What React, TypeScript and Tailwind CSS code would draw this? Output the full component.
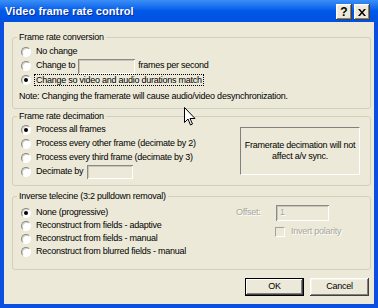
import type { ReactNode } from "react";

const raised =
  "shadow-[inset_-1px_-1px_#404040,inset_1px_1px_#ffffff,inset_-2px_-2px_#808080,inset_2px_2px_#f4f2e8]";
const sunken =
  "shadow-[inset_1px_1px_#8a8a86,inset_-1px_-1px_#ffffff,inset_2px_2px_#c9c6b8]";
const disabledText = "text-[#a9a69a] [text-shadow:1px_1px_0_#ffffff]";

const Radio = ({ checked }: { checked?: boolean }) => (
  <span className="flex h-[10px] w-[10px] shrink-0 items-center justify-center rounded-full border border-t-[#8a8a86] border-l-[#8a8a86] border-r-white border-b-white bg-white shadow-[inset_1px_1px_#d6d3c6]">
    {checked && <span className="h-[4px] w-[4px] rounded-full bg-black" />}
  </span>
);

const Row = ({
  checked,
  h = "h-[14px]",
  children,
}: {
  checked?: boolean;
  h?: string;
  children: ReactNode;
}) => (
  <div className={`flex items-center ${h}`}>
    <Radio checked={checked} />
    <div className="ml-[5px] flex items-center whitespace-nowrap">{children}</div>
  </div>
);

const Group = ({
  title,
  className,
  children,
}: {
  title: string;
  className?: string;
  children: ReactNode;
}) => (
  <fieldset className={`rounded-[3px] border border-[#d0d0bf] px-[4px] ${className ?? ""}`}>
    <legend className="px-[2px] leading-[11px]">{title}</legend>
    <div className="pl-[4px]">{children}</div>
  </fieldset>
);

const Field = ({ className, value }: { className: string; value?: string }) => (
  <span className={`flex items-center bg-[#ece9d8] pl-[4px] ${sunken} ${className}`}>
    {value && <span className={disabledText}>{value}</span>}
  </span>
);

export default function App() {
  return (
    <div className="relative flex h-[308px] w-[378px] flex-col overflow-hidden bg-[#0a4fe0] font-['Liberation_Sans',Arial,sans-serif] text-[9px] tracking-[-0.25px] text-black">
      {/* title bar */}
      <div className="flex h-[22px] shrink-0 items-center justify-between bg-gradient-to-b from-[#3b8ff7] via-[#0058e8] to-[#0051df] pl-[5px] pr-[8px]">
        <span className="text-[11px] font-bold tracking-[0.1px] text-white [text-shadow:1px_1px_0_#0a2f9e]">
          Video frame rate control
        </span>
        <div className="flex gap-[2px] pt-[2px]">
          <span className={`flex h-[16px] w-[16px] items-center justify-center bg-[#ece9d8] text-[12px] font-bold leading-none tracking-normal ${raised}`}>
            ?
          </span>
          <span className={`flex h-[16px] w-[16px] items-center justify-center bg-[#ece9d8] ${raised}`}>
            <svg width="8" height="7" viewBox="0 0 8 7">
              <path d="M0 0h2l2 2.5L6 0h2L5 3.5 8 7H6L4 4.5 2 7H0l3-3.5z" fill="#000" />
            </svg>
          </span>
        </div>
      </div>

      {/* body */}
      <div className="mb-[4px] ml-[4px] mr-[4px] flex flex-1 flex-col bg-[#ece9d8] pl-[8px] pr-[3px] pt-[10px]">
        <Group title="Frame rate conversion" className="pb-[4px]">
          <div className="pt-[2px]">
            <Row>No change</Row>
            <Row>
              Change to
              <Field className="ml-[3px] h-[15px] w-[57px]" />
              <span className="ml-[3px]">frames per second</span>
            </Row>
            <Row checked>
              <span className="-ml-[2px] border border-dotted border-black px-[1px] leading-[10px]">
                Change so video and audio durations match
              </span>
            </Row>
            <div className="-ml-[2px] mt-[3px] flex h-[14px] items-center">
              Note: Changing the framerate will cause audio/video desynchronization.
            </div>
          </div>
        </Group>

        <Group title="Frame rate decimation" className="mt-[2px] pb-[6px]">
          <div className="flex items-center pt-[1px]">
            <div className="w-[216px]">
              <Row checked>Process all frames</Row>
              <Row>Process every other frame (decimate by 2)</Row>
              <Row>Process every third frame (decimate by 3)</Row>
              <Row>
                Decimate by
                <Field className="ml-[4px] h-[14px] w-[46px]" />
              </Row>
            </div>
            <div className="ml-auto mr-[6px] flex h-[48px] w-[120px] items-center justify-center border border-t-[#808080] border-l-[#808080] border-r-white border-b-white text-center leading-[11px]">
              <span>
                Framerate decimation will not
                <br />
                affect a/v sync.
              </span>
            </div>
          </div>
        </Group>

        <Group title="Inverse telecine (3:2 pulldown removal)" className="mt-[5px] pb-[11px]">
          <div className="flex pt-[4px]">
            <div className="w-[215px]">
              <Row checked h="h-[13px]">None (progressive)</Row>
              <Row h="h-[13px]">Reconstruct from fields - adaptive</Row>
              <Row h="h-[13px]">Reconstruct from fields - manual</Row>
              <Row h="h-[13px]">Reconstruct from blurred fields - manual</Row>
            </div>
            <div className="-mt-[1px]">
              <div className="flex h-[16px] items-center">
                <span className={`w-[40px] ${disabledText}`}>Offset:</span>
                <Field className="h-[16px] w-[53px]" value="1" />
              </div>
              <div className="ml-[39px] mt-[6px] flex h-[10px] items-center">
                <span className="h-[10px] w-[10px] border border-t-[#a5a295] border-l-[#a5a295] border-r-white border-b-white bg-[#ece9d8]" />
                <span className={`ml-[6px] ${disabledText}`}>Invert polarity</span>
              </div>
            </div>
          </div>
        </Group>

        <div className="mr-[2px] mt-[8px] flex justify-end gap-[6px]">
          <button className="flex h-[18px] w-[59px] items-center justify-center border border-black bg-[#ece9d8] shadow-[inset_-1px_-1px_#404040,inset_1px_1px_#ffffff,inset_-2px_-2px_#808080]">
            OK
          </button>
          <button className={`flex h-[18px] w-[59px] items-center justify-center bg-[#ece9d8] ${raised}`}>
            Cancel
          </button>
        </div>
      </div>

      {/* mouse pointer */}
      <svg className="absolute left-[184px] top-[107px]" width="12" height="19" viewBox="0 0 12 19">
        <path
          d="M0.5 0.5v15l3.5-3.5 2.5 6 2-1-2.5-5.5h5z"
          fill="#fff"
          stroke="#000"
          strokeWidth="1"
          strokeLinejoin="miter"
        />
      </svg>
    </div>
  );
}
